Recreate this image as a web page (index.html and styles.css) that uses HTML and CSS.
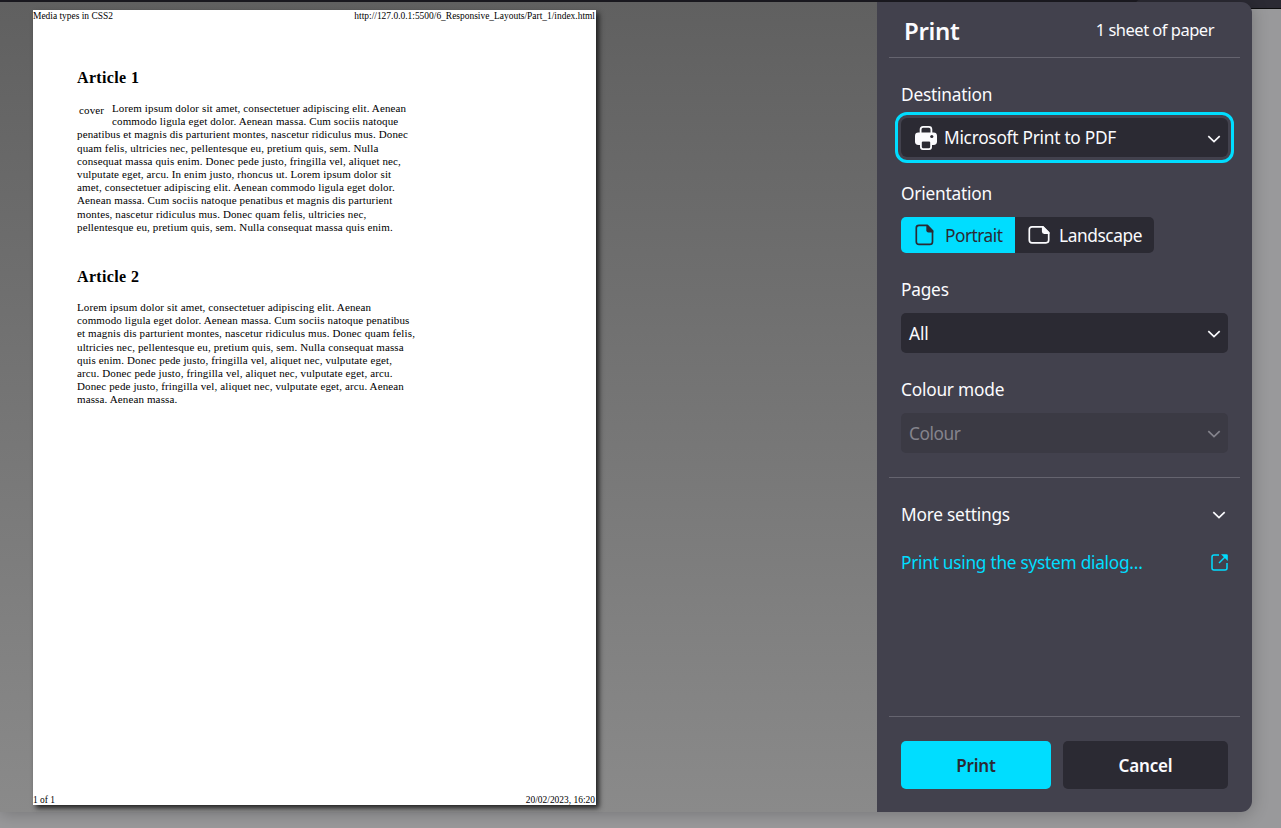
FILE: index.html
```html
<!DOCTYPE html>
<html lang="en">
<head>
<meta charset="utf-8">
<title>Print</title>
<link rel="stylesheet" href="styles.css">
</head>
<body>
<div class="browser-strip"><div class="strip-tab"></div></div>
<main class="dialog">
  <section class="preview">
    <div class="sheet">
      <div class="running"><span class="doc-title">Media types in CSS2</span><span class="doc-url">http://127.0.0.1:5500/6_Responsive_Layouts/Part_1/index.html</span></div>
      <div class="content">
        <article>
          <h2>Article 1</h2>
          <p><span class="cover">cover</span>Lorem ipsum dolor sit amet, consectetuer adipiscing elit. Aenean<br>commodo ligula eget dolor. Aenean massa. Cum sociis natoque<br>penatibus et magnis dis parturient montes, nascetur ridiculus mus. Donec<br>quam felis, ultricies nec, pellentesque eu, pretium quis, sem. Nulla<br>consequat massa quis enim. Donec pede justo, fringilla vel, aliquet nec,<br>vulputate eget, arcu. In enim justo, rhoncus ut. Lorem ipsum dolor sit<br>amet, consectetuer adipiscing elit. Aenean commodo ligula eget dolor.<br>Aenean massa. Cum sociis natoque penatibus et magnis dis parturient<br>montes, nascetur ridiculus mus. Donec quam felis, ultricies nec,<br>pellentesque eu, pretium quis, sem. Nulla consequat massa quis enim.</p>
        </article>
        <article>
          <h2>Article 2</h2>
          <p>Lorem ipsum dolor sit amet, consectetuer adipiscing elit. Aenean<br>commodo ligula eget dolor. Aenean massa. Cum sociis natoque penatibus<br>et magnis dis parturient montes, nascetur ridiculus mus. Donec quam felis,<br>ultricies nec, pellentesque eu, pretium quis, sem. Nulla consequat massa<br>quis enim. Donec pede justo, fringilla vel, aliquet nec, vulputate eget,<br>arcu. Donec pede justo, fringilla vel, aliquet nec, vulputate eget, arcu.<br>Donec pede justo, fringilla vel, aliquet nec, vulputate eget, arcu. Aenean<br>massa. Aenean massa.</p>
        </article>
      </div>
      <div class="running"><span>1 of 1</span><span>20/02/2023, 16:20</span></div>
    </div>
  </section>
  <aside class="panel">
    <header class="head"><h1>Print</h1><span class="count">1 sheet of paper</span></header>
    <div class="settings">
      <div class="field destination">
        <label>Destination</label>
        <div class="select focused">
          <svg class="printer" width="22" height="24" viewBox="0 0 22 24"><path d="M5.600 8V3.400Q5.600 .900 8.100 .900h5.800q2.500 0 2.500 2.500V8" fill="none" stroke="#fbfbfe" stroke-width="1.800"/><path d="M3.400 6.500h15.200q3.400 0 3.400 3.400v5.700q0 3.400-3.400 3.400H3.400Q0 19 0 15.600V9.900Q0 6.500 3.400 6.500Z" fill="#fbfbfe"/><rect x="5.900" y="14.500" width="10.200" height="8.600" rx="2" fill="#2b2a33" stroke="#fbfbfe" stroke-width="1.800"/><path d="M5 14.100h12" stroke="#fbfbfe" stroke-width="2"/><circle cx="16.800" cy="10.500" r="1.600" fill="#2b2a33"/></svg>
          <span class="t-dest">Microsoft Print to PDF</span>
          <svg class="chevron" width="14" height="8" viewBox="0 0 14 8"><path d="M1.300 1.200 7 6.500l5.700-5.300"/></svg>
        </div>
      </div>
      <div class="field orientation">
        <label>Orientation</label>
        <div class="toggle">
          <div class="option selected">
            <svg width="20" height="22" viewBox="0 0 20 22"><path d="M4 1.300h8.200l5.300 5.500v10.900q0 2.700-2.700 2.700H4q-2.700 0-2.700-2.700V4q0-2.700 2.700-2.700Z" fill="none" stroke="currentColor" stroke-width="1.700"/><path d="M11.300 1.100h1.500l5.500 5.700v1.700h-4.700q-2.300 0-2.300-2.300Z" fill="currentColor"/></svg>
            <span class="t-port">Portrait</span>
          </div>
          <div class="option">
            <svg width="22" height="20" viewBox="0 0 22 20"><path d="M4 1.900h11l5.700 5.600v7.600q0 2.700-2.700 2.700H4q-2.700 0-2.700-2.700V4.600q0-2.700 2.700-2.700Z" fill="none" stroke="currentColor" stroke-width="1.700"/><path d="M13.900 1.600h1.500l6 5.900v1.400h-5.200q-2.300 0-2.300-2.300Z" fill="currentColor"/></svg>
            <span class="t-land">Landscape</span>
          </div>
        </div>
      </div>
      <div class="field pages">
        <label>Pages</label>
        <div class="select"><span class="t-all">All</span><svg class="chevron" width="14" height="8" viewBox="0 0 14 8"><path d="M1.300 1.200 7 6.500l5.700-5.300"/></svg></div>
      </div>
      <div class="field mode">
        <label>Colour mode</label>
        <div class="select disabled"><span class="t-colour">Colour</span><svg class="chevron" width="14" height="8" viewBox="0 0 14 8"><path d="M1.300 1.200 7 6.500l5.700-5.300"/></svg></div>
      </div>
    </div>
    <div class="more">
      <div class="row"><span class="t-more">More settings</span><svg class="chevron" width="14" height="8" viewBox="0 0 14 8"><path d="M1.300 1.200 7 6.500l5.700-5.300"/></svg></div>
      <div class="row link"><span class="t-link">Print using the system dialog…</span><svg class="external" width="17" height="17" viewBox="0 0 17 17"><path d="M8 1H3Q1 1 1 3v11q0 2 2 2h11q2 0 2-2V9" fill="none" stroke="currentColor" stroke-width="1.500"/><path d="m8 9 6-6" stroke="currentColor" stroke-width="1.500"/><path d="M10 .2h5.600q1.200 0 1.200 1.200V7Z" fill="currentColor"/></svg></div>
    </div>
    <footer class="actions"><button class="primary">Print</button><button class="cancel">Cancel</button></footer>
  </aside>
</main>
</body>
</html>
```
FILE: styles.css
```css
* { box-sizing: border-box; }
body {
  margin: 0;
  height: 828px;
  overflow: hidden;
  background: #99999b;
  font-family: "Noto Sans", sans-serif;
  font-size: 17.3px;
  letter-spacing: -.22px;
  color: #fbfbfe;
}
.browser-strip {
  position: absolute;
  top: 0;
  left: 0;
  width: 100%;
  height: 9px;
  background: #1c1b22;
  border-bottom: 1px solid #0c0c0d;
}
.strip-tab {
  width: 145px;
  height: 8px;
  margin-left: auto;
  border-top-left-radius: 4px;
  background: #2b2a33;
}
.dialog {
  position: relative;
  display: flex;
  width: 1252px;
  height: 810px;
  margin-top: 2px;
  border-radius: 0 11px 11px 0;
  box-shadow: 0 2px 17px rgba(0, 0, 0, .24);
}
.preview {
  width: 877px;
  padding: 8px 0 0 33px;
  background: linear-gradient(#606060, #8a8a8a);
}
.sheet {
  display: flex;
  flex-direction: column;
  width: 563px;
  height: 795px;
  background: #fff;
  color: #000;
  font-family: "Liberation Serif", serif;
  letter-spacing: 0;
  box-shadow: 3px 3px 5px #202020;
}
.running {
  display: flex;
  justify-content: space-between;
  height: 11px;
  padding: 1px 1px 0 0;
  font-size: 9.45px;
  line-height: 11px;
  white-space: nowrap;
}
.content {
  flex: 1;
  padding: 47px 0 0 44px;
}
.content h2 {
  margin: 0 0 15px;
  font-size: 16px;
  line-height: 19px;
  letter-spacing: .35px;
}
.content p {
  margin: 0 0 33px;
  font-size: 11px;
  line-height: 13.2px;
  letter-spacing: .13px;
  white-space: nowrap;
}
.cover {
  float: left;
  width: 35px;
  height: 20px;
  padding: 2px 0 0 2px;
}
.panel {
  display: flex;
  flex-direction: column;
  width: 375px;
  padding: 0 12px;
  background: #42414d;
  border-radius: 0 11px 11px 0;
  white-space: nowrap;
}
.head {
  display: flex;
  align-items: center;
  justify-content: space-between;
  height: 56px;
  padding: 0 26px 0 15px;
  border-bottom: 1px solid #65646f;
}
.head h1 {
  margin: 2px 0 0;
  font-size: 24px;
  line-height: 30px;
  font-weight: 600;
  letter-spacing: -.3px;
}
.count {
  font-size: 16.5px;
  letter-spacing: -.5px;
}
.settings {
  height: 420px;
  padding: 25px 12px 0;
  border-bottom: 1px solid #65646f;
}
.field label {
  display: block;
  height: 24px;
  line-height: 24px;
}
.destination { height: 99px; }
.orientation { height: 96px; }
.pages { height: 100px; }
.select {
  display: flex;
  align-items: center;
  height: 40px;
  margin-top: 11px;
  padding: 0 7px 0 8px;
  border-radius: 5px;
  background: #2b2a33;
}
.select .chevron { margin-top: 2px; }
.select.focused {
  height: 39px;
  padding-left: 14px;
  outline: 3px solid #00ddff;
  outline-offset: 3px;
  border-radius: 6px;
}
.t-dest {
  margin-top: -1px;
  letter-spacing: -.26px;
}
.t-all { letter-spacing: -.1px; }
.t-colour { letter-spacing: -.45px; }
.printer { margin-right: 7px; }
.chevron {
  margin-left: auto;
  fill: none;
  stroke: currentColor;
  stroke-width: 1.7;
}
.disabled {
  background: #3b3a44;
  color: #85848d;
}
.toggle {
  display: flex;
  width: 253px;
  height: 36px;
  margin-top: 11px;
  border-radius: 5px;
  overflow: hidden;
}
.option {
  display: flex;
  flex: 1;
  align-items: center;
  gap: 9px;
  padding-left: 13px;
  background: #2b2a33;
}
.option.selected {
  flex: 0 0 114px;
  padding-left: 14px;
  gap: 10px;
  background: #00ddff;
  color: #2b2a33;
}
.t-port { letter-spacing: -.5px; }
.t-land { letter-spacing: -.4px; }
.more {
  height: 239px;
  padding: 24px 14px 0 12px;
  border-bottom: 1px solid #65646f;
}
.row {
  display: flex;
  align-items: center;
  height: 24px;
  margin-bottom: 24px;
}
.row .chevron { margin-top: 1px; }
.link { color: #00ddff; letter-spacing: -.27px; }
.external { margin-left: auto; margin-right: -2px; }
.actions {
  display: flex;
  gap: 12px;
  padding: 24px 12px 0;
}
button {
  width: 150px;
  height: 48px;
  padding: 0;
  border: 0;
  border-radius: 5px;
  font: 600 17px "Noto Sans", sans-serif;
  letter-spacing: -.15px;
}
.primary { background: #00ddff; color: #2b2a33; }
.cancel { width: 165px; background: #2b2a33; color: #fbfbfe; }
```
